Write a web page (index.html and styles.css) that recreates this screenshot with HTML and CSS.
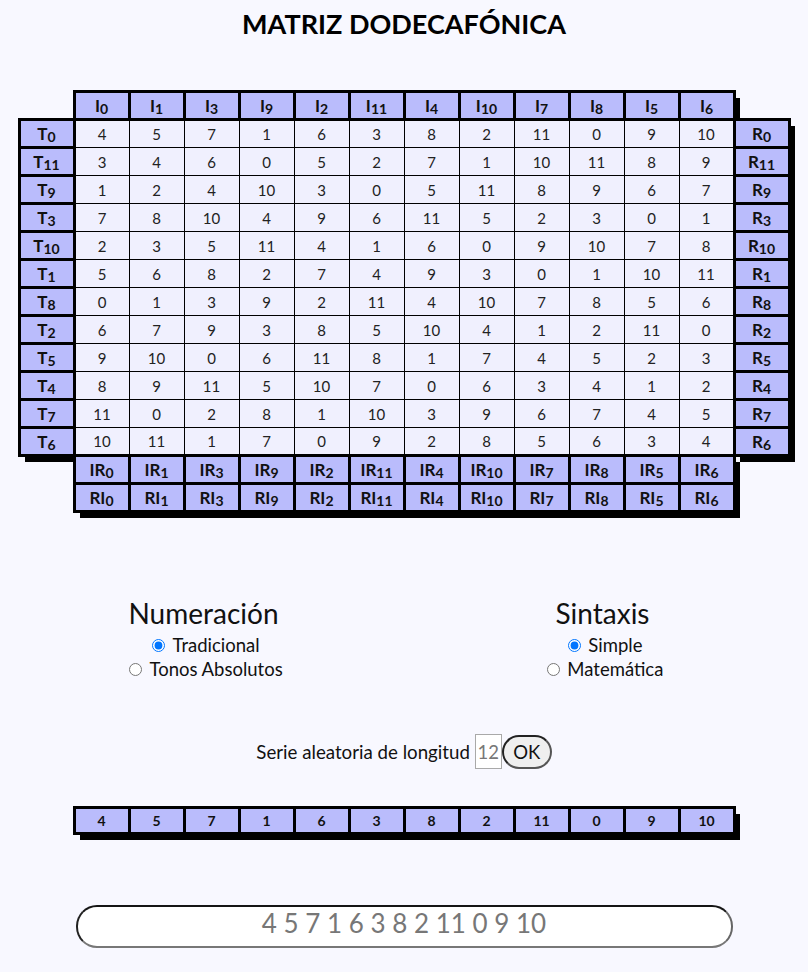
FILE: index.html
```html
<!DOCTYPE html>
<html lang="es">
<head>
<meta charset="utf-8">
<title>Matriz dodecafónica</title>
<link rel="stylesheet" href="styles.css">
</head>
<body>
<h1 class="title">MATRIZ DODECAFÓNICA</h1>
<table class="matrix">
<tr><td class="c"></td><th>I<sub>0</sub></th><th>I<sub>1</sub></th><th>I<sub>3</sub></th><th>I<sub>9</sub></th><th>I<sub>2</sub></th><th>I<sub>11</sub></th><th>I<sub>4</sub></th><th>I<sub>10</sub></th><th>I<sub>7</sub></th><th>I<sub>8</sub></th><th>I<sub>5</sub></th><th>I<sub>6</sub></th><td class="c"></td></tr>
<tr><th>T<sub>0</sub></th><td class="n">4</td><td class="n">5</td><td class="n">7</td><td class="n">1</td><td class="n">6</td><td class="n">3</td><td class="n">8</td><td class="n">2</td><td class="n">11</td><td class="n">0</td><td class="n">9</td><td class="n">10</td><th>R<sub>0</sub></th></tr>
<tr><th>T<sub>11</sub></th><td class="n">3</td><td class="n">4</td><td class="n">6</td><td class="n">0</td><td class="n">5</td><td class="n">2</td><td class="n">7</td><td class="n">1</td><td class="n">10</td><td class="n">11</td><td class="n">8</td><td class="n">9</td><th>R<sub>11</sub></th></tr>
<tr><th>T<sub>9</sub></th><td class="n">1</td><td class="n">2</td><td class="n">4</td><td class="n">10</td><td class="n">3</td><td class="n">0</td><td class="n">5</td><td class="n">11</td><td class="n">8</td><td class="n">9</td><td class="n">6</td><td class="n">7</td><th>R<sub>9</sub></th></tr>
<tr><th>T<sub>3</sub></th><td class="n">7</td><td class="n">8</td><td class="n">10</td><td class="n">4</td><td class="n">9</td><td class="n">6</td><td class="n">11</td><td class="n">5</td><td class="n">2</td><td class="n">3</td><td class="n">0</td><td class="n">1</td><th>R<sub>3</sub></th></tr>
<tr><th>T<sub>10</sub></th><td class="n">2</td><td class="n">3</td><td class="n">5</td><td class="n">11</td><td class="n">4</td><td class="n">1</td><td class="n">6</td><td class="n">0</td><td class="n">9</td><td class="n">10</td><td class="n">7</td><td class="n">8</td><th>R<sub>10</sub></th></tr>
<tr><th>T<sub>1</sub></th><td class="n">5</td><td class="n">6</td><td class="n">8</td><td class="n">2</td><td class="n">7</td><td class="n">4</td><td class="n">9</td><td class="n">3</td><td class="n">0</td><td class="n">1</td><td class="n">10</td><td class="n">11</td><th>R<sub>1</sub></th></tr>
<tr><th>T<sub>8</sub></th><td class="n">0</td><td class="n">1</td><td class="n">3</td><td class="n">9</td><td class="n">2</td><td class="n">11</td><td class="n">4</td><td class="n">10</td><td class="n">7</td><td class="n">8</td><td class="n">5</td><td class="n">6</td><th>R<sub>8</sub></th></tr>
<tr><th>T<sub>2</sub></th><td class="n">6</td><td class="n">7</td><td class="n">9</td><td class="n">3</td><td class="n">8</td><td class="n">5</td><td class="n">10</td><td class="n">4</td><td class="n">1</td><td class="n">2</td><td class="n">11</td><td class="n">0</td><th>R<sub>2</sub></th></tr>
<tr><th>T<sub>5</sub></th><td class="n">9</td><td class="n">10</td><td class="n">0</td><td class="n">6</td><td class="n">11</td><td class="n">8</td><td class="n">1</td><td class="n">7</td><td class="n">4</td><td class="n">5</td><td class="n">2</td><td class="n">3</td><th>R<sub>5</sub></th></tr>
<tr><th>T<sub>4</sub></th><td class="n">8</td><td class="n">9</td><td class="n">11</td><td class="n">5</td><td class="n">10</td><td class="n">7</td><td class="n">0</td><td class="n">6</td><td class="n">3</td><td class="n">4</td><td class="n">1</td><td class="n">2</td><th>R<sub>4</sub></th></tr>
<tr><th>T<sub>7</sub></th><td class="n">11</td><td class="n">0</td><td class="n">2</td><td class="n">8</td><td class="n">1</td><td class="n">10</td><td class="n">3</td><td class="n">9</td><td class="n">6</td><td class="n">7</td><td class="n">4</td><td class="n">5</td><th>R<sub>7</sub></th></tr>
<tr><th>T<sub>6</sub></th><td class="n">10</td><td class="n">11</td><td class="n">1</td><td class="n">7</td><td class="n">0</td><td class="n">9</td><td class="n">2</td><td class="n">8</td><td class="n">5</td><td class="n">6</td><td class="n">3</td><td class="n">4</td><th>R<sub>6</sub></th></tr>
<tr><td class="c"></td><th>IR<sub>0</sub></th><th>IR<sub>1</sub></th><th>IR<sub>3</sub></th><th>IR<sub>9</sub></th><th>IR<sub>2</sub></th><th>IR<sub>11</sub></th><th>IR<sub>4</sub></th><th>IR<sub>10</sub></th><th>IR<sub>7</sub></th><th>IR<sub>8</sub></th><th>IR<sub>5</sub></th><th>IR<sub>6</sub></th><td class="c"></td></tr>
<tr><td class="c"></td><th>RI<sub>0</sub></th><th>RI<sub>1</sub></th><th>RI<sub>3</sub></th><th>RI<sub>9</sub></th><th>RI<sub>2</sub></th><th>RI<sub>11</sub></th><th>RI<sub>4</sub></th><th>RI<sub>10</sub></th><th>RI<sub>7</sub></th><th>RI<sub>8</sub></th><th>RI<sub>5</sub></th><th>RI<sub>6</sub></th><td class="c"></td></tr>
</table>

<div class="options">
  <div class="opt-col">
    <h2 class="opt-title">Numeración</h2>
    <div class="opt-line"><input type="radio" name="num" id="n1" checked> <label for="n1">Tradicional</label></div>
    <div class="opt-line"><input type="radio" name="num" id="n2"> <label for="n2">Tonos Absolutos</label></div>
  </div>
  <div class="opt-col">
    <h2 class="opt-title">Sintaxis</h2>
    <div class="opt-line"><input type="radio" name="sin" id="s1" checked> <label for="s1">Simple</label></div>
    <div class="opt-line"><input type="radio" name="sin" id="s2"> <label for="s2">Matemática</label></div>
  </div>
</div>

<div class="random">Serie aleatoria de longitud <input class="len" type="text" value="12"><button class="ok" type="button">OK</button></div>

<table class="series">
<tr><th>4</th><th>5</th><th>7</th><th>1</th><th>6</th><th>3</th><th>8</th><th>2</th><th>11</th><th>0</th><th>9</th><th>10</th></tr>
</table>

<div class="output">4 5 7 1 6 3 8 2 11 0 9 10</div>
</body>
</html>
```

FILE: styles.css
```css
html, body {
  margin: 0;
  padding: 0;
}
body {
  background: #f8f8ff;
  font-family: Lato, "Open Sans", sans-serif;
  color: #111;
}
.title {
  margin: 6px 0 0;
  font-size: 27px;
  line-height: 35px;
  font-weight: 700;
  text-align: center;
  color: #000;
}
.matrix {
  margin: 49px auto 0;
  width: 773px;
  border-collapse: collapse;
  table-layout: fixed;
}
.matrix tr {
  height: 28px;
}
.matrix th, .series th {
  padding: 0;
  border: 3px solid #000;
  background: #babcfc;
  box-shadow: 6px 6px 0 #000;
  font-weight: 700;
  font-size: 17px;
  line-height: 20px;
  color: #111;
  text-align: center;
}
.matrix sub {
  font-size: 14px;
  vertical-align: -2px;
  line-height: 0;
}
.matrix td.n {
  padding: 0;
  border: 1px solid #000;
  background: #f0f0fe;
  font-size: 15px;
  color: #222;
  text-align: center;
}
.matrix td.c {
  padding: 0;
  border: none;
  background: transparent;
}
.options {
  display: grid;
  grid-template-columns: 399px 399px;
  padding-left: 4px;
  margin-top: 83px;
}
.opt-col {
  text-align: center;
}
.opt-title {
  margin: 0 0 3px;
  font-size: 28px;
  line-height: 34px;
  font-weight: 400;
  color: #111;
}
.opt-line {
  font-size: 18.5px;
  line-height: 24px;
}
.random {
  margin-top: 53px;
  text-align: center;
  font-size: 18.7px;
}
.len {
  box-sizing: border-box;
  width: 27px;
  height: 35px;
  padding: 0;
  border: 1px solid #a9a9a9;
  background: #fff;
  font-family: Lato, sans-serif;
  font-size: 18.5px;
  color: #777;
  text-align: center;
  vertical-align: baseline;
}
.ok {
  box-sizing: border-box;
  width: 50px;
  height: 34px;
  padding: 0;
  border: 2px solid;
  border-color: #222 #555 #555 #222;
  border-radius: 17px;
  background: #efefef;
  font-family: Lato, sans-serif;
  font-size: 18.5px;
  color: #111;
  vertical-align: baseline;
}
.series {
  margin: 37px auto 0;
  width: 663px;
  border-collapse: collapse;
  table-layout: fixed;
}
.series th {
  height: 23px;
  font-size: 14px;
  line-height: 18px;
}
.output {
  box-sizing: border-box;
  width: 657px;
  height: 43px;
  margin: 70px auto 0;
  border: 2px solid;
  border-color: #151515 #666 #777 #222;
  border-radius: 21px;
  background: #fff;
  font-size: 26px;
  line-height: 33px;
  color: #777;
  text-align: center;
}
```
